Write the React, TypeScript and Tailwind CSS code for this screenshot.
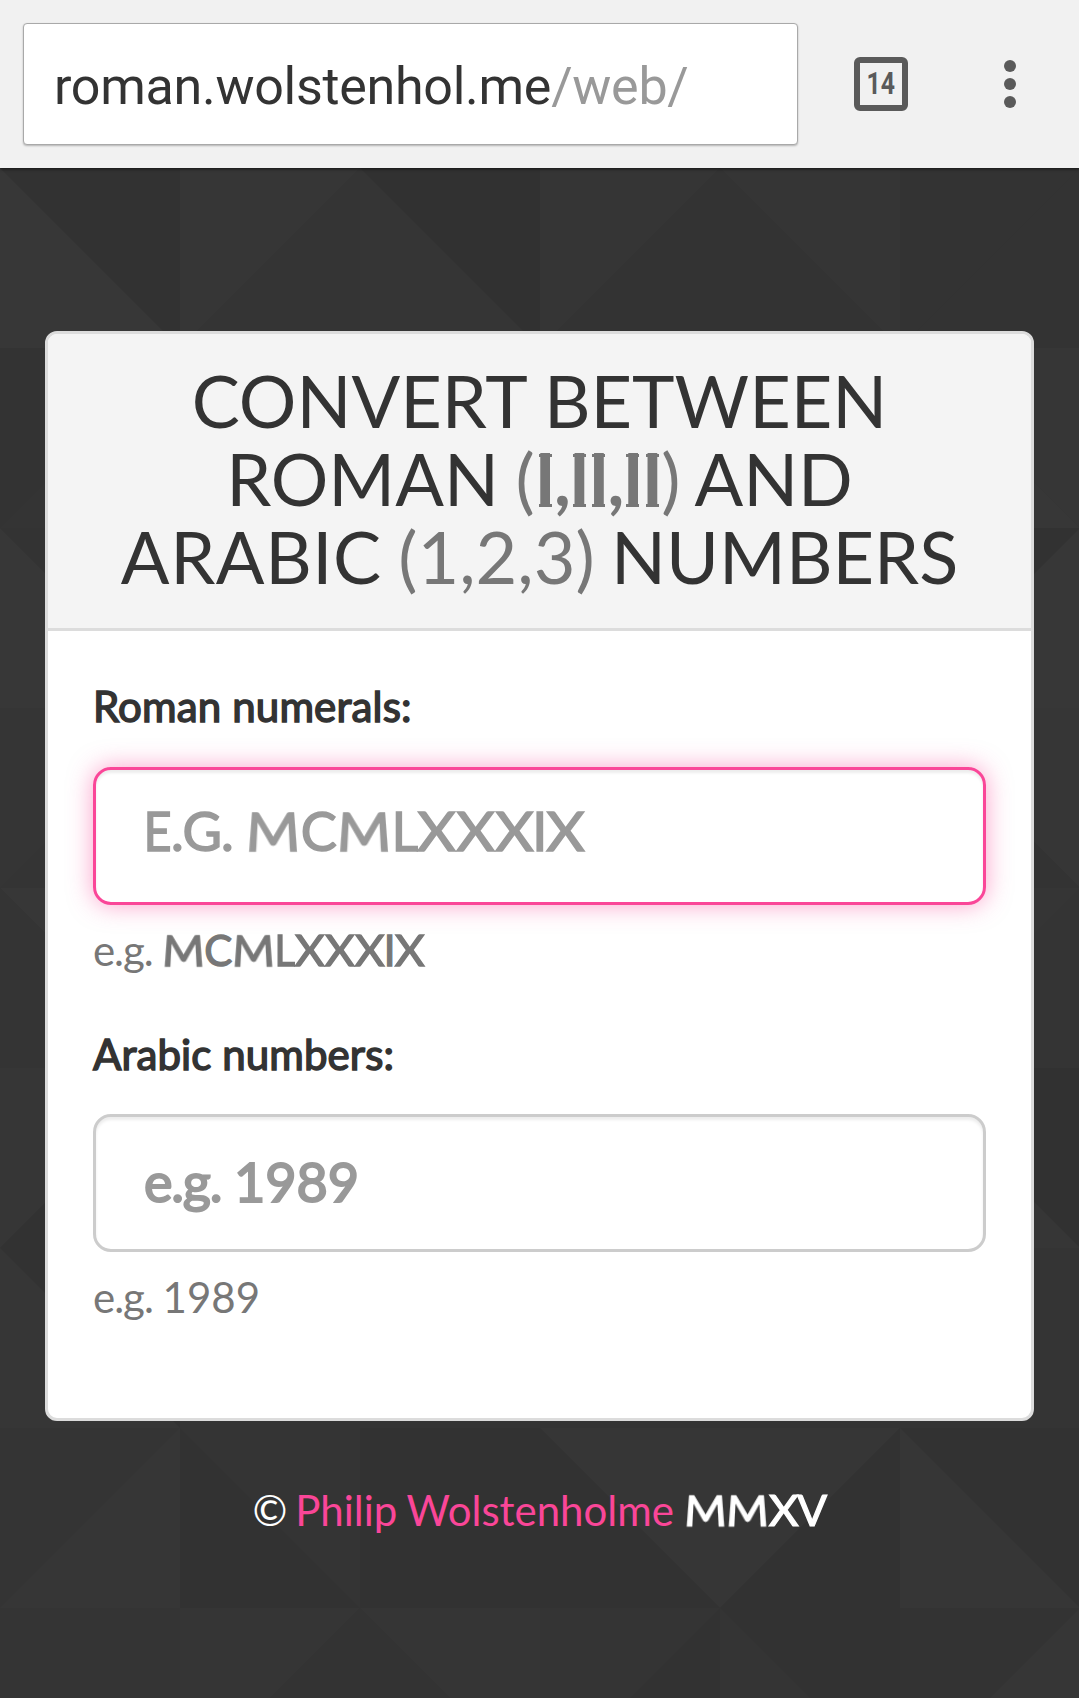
const UL = "0,0 180,0 0,180";
const LR = "180,0 180,180 0,180";
const LL = "0,0 0,180 180,180";
const UR = "0,0 180,0 180,180";

type Cell = [number, number, "/" | "\\", string, string];

// column, row, diagonal, upper colour, lower colour
const cells: Cell[] = [
  [0, 0, "\\", "#323232", "#373737"],
  [1, 0, "/", "#363636", "#343434"],
  [2, 0, "\\", "#313131", "#353535"],
  [3, 0, "/", "#353535", "#333333"],
  [4, 0, "\\", "#353535", "#333333"],
  [5, 0, "/", "#333333", "#333333"],
  [0, 1, "/", "#333333", "#343434"],
  [0, 2, "\\", "#333333", "#373737"],
  [0, 3, "/", "#353535", "#343434"],
  [0, 4, "\\", "#373737", "#343434"],
  [0, 5, "/", "#363636", "#323232"],
  [0, 6, "\\", "#323232", "#363636"],
  [5, 1, "\\", "#363636", "#373737"],
  [5, 2, "/", "#323232", "#373737"],
  [5, 3, "\\", "#363636", "#333333"],
  [5, 4, "/", "#353535", "#343434"],
  [5, 5, "\\", "#313131", "#363636"],
  [5, 6, "/", "#343434", "#343434"],
  [0, 7, "/", "#343434", "#363636"],
  [1, 7, "\\", "#343434", "#323232"],
  [2, 7, "/", "#323232", "#323232"],
  [3, 7, "\\", "#363636", "#323232"],
  [4, 7, "/", "#363636", "#323232"],
  [5, 7, "\\", "#323232", "#363636"],
  [0, 8, "/", "#343434", "#343434"],
  [1, 8, "/", "#353535", "#333333"],
  [2, 8, "\\", "#353535", "#333333"],
  [3, 8, "/", "#343434", "#323232"],
  [4, 8, "\\", "#323232", "#343434"],
  [5, 8, "/", "#333333", "#363636"],
];

function Triangles() {
  return (
    <svg className="absolute inset-0 h-full w-full" aria-hidden="true">
      {cells.map(([c, r, d, upper, lower]) => (
        <g key={`${c}-${r}`} transform={`translate(${c * 180} ${r * 180})`}>
          <polygon points={d === "/" ? UL : UR} fill={upper} />
          <polygon points={d === "/" ? LR : LL} fill={lower} />
        </g>
      ))}
    </svg>
  );
}

// Per-letter shaping for the inscriptional capitals: splayed M, wide X, narrow E and L.
const glyphs: Record<string, string> = {
  M: "inline-block mx-[0.035em] [transform:translateY(-0.015em)_perspective(3em)_rotateX(28deg)_scale(1.07,1.1)]",
  C: "inline-block mx-[0.01em]",
  L: "inline-block -mx-[0.015em] scale-x-95",
  X: "inline-block mx-[0.035em] scale-x-110",
  I: "inline-block -mx-[0.03em]",
  V: "inline-block -mx-[0.01em] scale-x-105",
  E: "inline-block -mx-[0.03em] scale-x-90",
  G: "inline-block",
  ".": "inline-block -mx-[0.02em]",
};

function Roman({ text }: { text: string }) {
  return (
    <span>
      {text.split("").map((ch, i) => (
        <span key={i} className={glyphs[ch]}>
          {ch}
        </span>
      ))}
    </span>
  );
}

function FlaredI() {
  return (
    <span className="relative inline-block before:absolute before:left-[4px] before:top-[15px] before:h-[3px] before:w-[13px] before:bg-[#777] after:absolute after:left-[4px] after:top-[65px] after:h-[3px] after:w-[13px] after:bg-[#777]">
      I
    </span>
  );
}

function Toolbar() {
  return (
    <header className="relative z-10 flex h-[168px] items-start bg-[#f1f1f1] pl-[23px] pt-[23px] shadow-[0_1px_3px_rgba(0,0,0,0.6)]">
      <div className="flex h-[122px] w-[775px] items-center rounded-[4px] border border-[#a9a9a9] bg-white pl-[30px] pt-[5px] font-['Roboto'] text-[52px] tracking-[-0.28px] shadow-[0_1px_2px_rgba(0,0,0,0.25)]">
        <span className="text-[#333]">roman.wolstenhol.me</span>
        <span className="text-[#999]">/web/</span>
      </div>
      <div className="ml-[56px] mt-[34px] flex h-[54px] w-[54px] items-center justify-center rounded-[6px] border-[6px] border-[#5a5a5a] font-['Roboto'] text-[31px] font-bold text-[#5a5a5a]">
        <span className="scale-x-[0.8]">14</span>
      </div>
      <div className="ml-[96px] mt-[37px] flex flex-col gap-[6px]">
        <i className="size-[12px] rounded-full bg-[#5a5a5a]" />
        <i className="size-[12px] rounded-full bg-[#5a5a5a]" />
        <i className="size-[12px] rounded-full bg-[#5a5a5a]" />
      </div>
    </header>
  );
}

export default function App() {
  return (
    <div className="flex h-[1698px] w-[1079px] flex-col overflow-hidden bg-[#343434] font-['Lato',sans-serif] text-[#333]">
      <Toolbar />
      <main className="relative flex-1 px-[45px] pt-[163px]">
        <Triangles />
        <section className="relative h-[1090px] w-[989px] rounded-[12px] border-[3px] border-[#dcdcdc] bg-white">
          <h1 className="h-[297px] rounded-t-[9px] border-b-[3px] border-[#dcdcdc] bg-[#f4f4f4] pt-[27px] text-center text-[72px] leading-[78px] whitespace-nowrap">
            <span className="block">CONVERT BETWEEN</span>
            <span className="block [word-spacing:-2px]">
              ROMAN{" "}
              <span className="text-[#777]">
                (
                <b className="tracking-[-2px]">
                  <FlaredI />,<FlaredI />
                  <FlaredI />,<FlaredI />
                  <FlaredI />
                </b>
                )
              </span>{" "}
              AND
            </span>
            <span className="block [word-spacing:-2px]">
              <span className="tracking-[0.6px]">ARABIC</span> <span className="text-[#777]">(1,2,3)</span>{" "}
              <span>NUMBERS</span>
            </span>
          </h1>
          <form className="flex flex-col px-[45px] pt-[45px] text-[42px] leading-[60px]">
            <label className="tracking-[0.15px] [-webkit-text-stroke:1.5px_#333]">Roman numerals:</label>
            <div className="relative mt-[31px] flex h-[138px] items-center rounded-[18px] border-[3px] border-[#fa4698] px-[48px] pb-[10px] text-[54px] whitespace-nowrap text-[#999] shadow-[inset_0_3px_3px_rgba(0,0,0,0.075),0_0_24px_rgba(250,70,152,0.5)] [-webkit-text-stroke:1.5px_#999]">
              <div>
                <Roman text="E.G." /> <Roman text="MCMLXXXIX" />
              </div>
              <input className="absolute inset-0 bg-transparent outline-none" aria-label="Roman numerals" />
            </div>
            <p className="mt-[15px] text-[#777]">
              <span className="tracking-[-1.1px]">e.g. </span>
              <span className="tracking-[-0.1px] [-webkit-text-stroke:1.3px_#777]">
                <Roman text="MCMLXXXIX" />
              </span>
            </p>
            <label className="mt-[44px] tracking-[0.1px] [-webkit-text-stroke:1.5px_#333]">Arabic numbers:</label>
            <div className="relative mt-[30px] flex h-[138px] items-center rounded-[18px] border-[3px] border-[#ccc] px-[48px] pb-[2px] text-[54px] text-[#999] shadow-[inset_0_3px_3px_rgba(0,0,0,0.075)] [-webkit-text-stroke:2px_#999]">
              <div>
                <span className="tracking-[-1.2px]">e.g. </span>1989
              </div>
              <input className="absolute inset-0 bg-transparent outline-none" aria-label="Arabic numbers" />
            </div>
            <p className="mt-[15px] text-[#777]">
              <span className="tracking-[-1px]">e.g. </span>1989
            </p>
          </form>
        </section>
        <footer className="relative mt-[59px] text-center text-[42px] leading-[60px] text-white [word-spacing:-1px]">
          <span className="-mr-[2px]">©</span> <a className="text-[#fa4698]">Philip Wolstenholme</a>{" "}
          <span className="ml-px [-webkit-text-stroke:1.2px_#fff]">
            <Roman text="MMXV" />
          </span>
        </footer>
      </main>
    </div>
  );
}
